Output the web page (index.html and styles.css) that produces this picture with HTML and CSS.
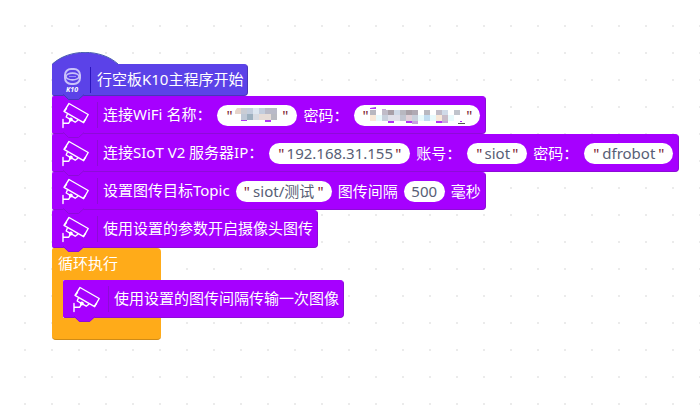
FILE: index.html
```html
<!DOCTYPE html>
<html lang="zh-CN">
<head>
<meta charset="utf-8">
<title>行空板K10主程序</title>
<link rel="stylesheet" href="styles.css">
</head>
<body>
<svg class="defs" aria-hidden="true">
  <symbol id="camera" viewBox="0 0 28 28">
    <g fill="none" stroke="#fff" stroke-width="1.4" stroke-linejoin="round" stroke-linecap="round">
      <path d="M8 2.500 27.200 13.500 22.600 21.700 3 10.300Z"/>
      <path d="M5.500 7.500 3.500 10M24.500 18.500l-2 2.500"/>
      <path d="M2 18.500v8M2 22.300h5.600l1.600-2.600M6.200 13.500l-1 2.500 9 5.200 2.600-2"/>
      <circle cx="9.800" cy="18.400" r="1.300" fill="#fff"/>
    </g>
  </symbol>
  <symbol id="tab" viewBox="0 0 22 7">
    <path class="tab-shape" d="M0 0V1L5.500 6H15.500L21 1V0Z"/>
    <path class="tab-line" d="M0 .5h.5L5.500 5.500H15.500L21 .5" />
  </symbol>
</svg>
<main class="workspace">
  <section class="stack">
    <div class="block start">
      <svg class="hat" viewBox="0 0 66 13" aria-hidden="true"><path d="M0 13V12C17-3.500 49-3.500 66 12V13Z" fill="#5b42e8"/><path d="M.5 12C17-3.500 49-3.500 66 12" fill="none" stroke="#4a5fae"/></svg>
      <svg class="icon board" viewBox="0 0 28 28" aria-hidden="true">
        <rect x="4" y="3" width="15" height="15" rx="6" fill="none" stroke="#c9c2fa" stroke-width="2"/>
        <ellipse cx="11.500" cy="10.500" rx="6.500" ry="3.400" fill="none" stroke="#c9c2fa" stroke-width="1.600"/>
        <path d="M8 10.500h7" stroke="#9d91f3"/>
        <text x="5" y="26" class="board-name">K10</text>
      </svg>
      <span class="label">行空板K10主程序开始</span>
      <svg class="tab"><use href="#tab"/></svg>
    </div>
    <div class="block">
      <svg class="icon" aria-hidden="true"><use href="#camera"/></svg>
      <span class="label">连接WiFi 名称：</span>
      <span class="pill name"><span class="quote">"</span>
        <svg class="mosaic" width="44" height="16" viewBox="0 0 44 16" role="img" aria-label="已隐藏">
          <path fill="#e6d5cc" d="M2 1h4v6H0V4z"/><path fill="#c9ccd4" d="M6 1h6v6H6z"/><path fill="#c3cddd" d="M12 1h6v6h-6zM24 1h6v6h-6z"/><path fill="#dde6f0" d="M18 1h6v6h-6z"/><path fill="#b9bac8" d="M30 1h12v6H30z"/>
          <path fill="#bfc8d6" d="M6 7h6v6H6z"/><path fill="#9db0bf" d="M12 7h6v6h-6z"/><path fill="#d8dbe2" d="M18 7h6v6h-6z"/><path fill="#e6dcd7" d="M24 7h12v6H24z"/><path fill="#b9bac1" d="M36 7h6v6h-6z"/>
          <path fill="#ae36f2" d="M6 13h6v1H6zM30 13h6v2h-6z"/>
        </svg>
      <span class="quote">"</span></span>
      <span class="label">密码：</span>
      <span class="pill secret"><span class="quote">"</span>
        <svg class="mosaic" width="96" height="18" viewBox="0 0 96 18" role="img" aria-label="已隐藏">
          <path fill="#b8b8c0" d="M1 4h6v5H1zM31 4h6v5h-6zM55 4h6v5h-6z"/>
          <path fill="#c0bcc8" d="M13 4h6v5h-6zM67 4h6v5h-6z"/>
          <path fill="#a8a0a8" d="M19 4h6v5h-6zM37 4h6v5h-6z"/>
          <path fill="#d0dae8" d="M25 4h6v5h-6zM73 4h6v5h-6z"/>
          <path fill="#b0aab4" d="M43 4h6v5h-6z"/>
          <path fill="#c0c4cc" d="M85 4h6v5h-6z"/>
          <path fill="#f8e8d8" d="M1 9h6v6H1zM67 9h6v6h-6z"/>
          <path fill="#e8fafc" d="M7 9h6v6H7zM49 9h6v6h-6zM61 9h6v6h-6zM79 9h6v6h-6z"/>
          <path fill="#c8d0dc" d="M13 9h6v6h-6zM43 9h6v6h-6z"/>
          <path fill="#e0e0ea" d="M19 9h12v6H19z"/>
          <path fill="#c0c4d0" d="M31 9h6v6h-6z"/>
          <path fill="#e0d0d8" d="M37 9h6v6h-6z"/>
          <path fill="#c0dcf0" d="M55 9h6v6h-6z"/>
          <path fill="#c8bcc8" d="M73 9h6v6h-6z"/>
          <path fill="#ae36f2" d="M1 2l6-1v2H1zM19 15h6v2h-6zM37 15h6v2h-6zM67 15h6v2h-6zM91 15h2v1h-2z"/>
          <path fill="#c9a0e0" d="M13 3h4v1h-4zM43 15h6v3h-6zM73 15h6v2h-6z"/>
          <path fill="#555" d="M89 17h7v1h-7z"/>
        </svg>
      <span class="quote">"</span></span>
      <svg class="tab"><use href="#tab"/></svg>
    </div>
    <div class="block">
      <svg class="icon" aria-hidden="true"><use href="#camera"/></svg>
      <label class="label" for="ip">连接SIoT V2 服务器IP：</label>
      <span class="pill ip"><span class="quote">"</span><input id="ip" value="192.168.31.155"><span class="quote">"</span></span>
      <label class="label" for="account">账号：</label>
      <span class="pill account"><span class="quote">"</span><input id="account" value="siot"><span class="quote">"</span></span>
      <label class="label" for="password">密码：</label>
      <span class="pill password"><span class="quote">"</span><input id="password" value="dfrobot"><span class="quote">"</span></span>
      <svg class="tab"><use href="#tab"/></svg>
    </div>
    <div class="block">
      <svg class="icon" aria-hidden="true"><use href="#camera"/></svg>
      <label class="label" for="topic">设置图传目标Topic</label>
      <span class="pill topic"><span class="quote">"</span><input id="topic" value="siot/测试"><span class="quote">"</span></span>
      <label class="label" for="interval">图传间隔</label>
      <span class="pill interval"><input id="interval" value="500"></span>
      <span class="label">毫秒</span>
      <svg class="tab"><use href="#tab"/></svg>
    </div>
    <div class="block">
      <svg class="icon" aria-hidden="true"><use href="#camera"/></svg>
      <span class="label">使用设置的参数开启摄像头图传</span>
      <svg class="tab"><use href="#tab"/></svg>
    </div>
    <div class="loop">
      <div class="loop-head">循环执行</div>
      <div class="loop-body">
        <div class="block">
          <svg class="icon" aria-hidden="true"><use href="#camera"/></svg>
          <span class="label">使用设置的图传间隔传输一次图像</span>
          <svg class="tab"><use href="#tab"/></svg>
        </div>
      </div>
      <div class="loop-foot"></div>
    </div>
  </section>
</main>
</body>
</html>
```
FILE: styles.css
```css
* {
  box-sizing: border-box;
}

body {
  margin: 0;
  background: #fff;
  color: #fff;
  font: 15px/20px "Noto Sans", "Noto Sans CJK SC", sans-serif;
}

.defs {
  position: absolute;
  width: 0;
  height: 0;
}

.workspace {
  min-height: 100vh;
  padding: 64px 20px 20px 52px;
  background: linear-gradient(#ebebeb, #ebebeb) 0 0 / 2px 2px no-repeat;
  background: conic-gradient(from 270deg at 2px 2px, #ebebeb 90deg, transparent 0) 24px 25px / 27px 27px;
}

.stack {
  display: flex;
  flex-direction: column;
  align-items: flex-start;
}

.block {
  --fill: #a600ff;
  --edge: #8d0bd8;
  position: relative;
  display: flex;
  align-items: center;
  width: max-content;
  height: 38px;
  padding: 0 4px 0 8px;
  border: 1px solid var(--edge);
  border-top-color: var(--fill);
  border-left-color: var(--fill);
  border-radius: 2px 4px 4px 2px;
  background: var(--fill);
  white-space: nowrap;
}

.start {
  --fill: #5b42e8;
  --edge: #4935ba;
  height: 32px;
  border-top-left-radius: 0;
}

.hat {
  position: absolute;
  left: -1px;
  bottom: 30px;
  width: 66px;
  height: 13px;
}

.tab {
  position: absolute;
  z-index: 1;
  left: 10px;
  top: calc(100% - 1px);
  width: 22px;
  height: 7px;
}

.tab-shape {
  fill: var(--fill);
}

.tab-line {
  fill: none;
  stroke: var(--edge);
}

.icon {
  flex: none;
  width: 28px;
  height: 28px;
  margin-right: 8px;
}

.label {
  padding-bottom: 1px;
}

.icon + .label {
  padding-left: 5px;
  border-left: 1px solid var(--edge);
  line-height: 25px;
}

.start .icon {
  margin-right: 1px;
}

.start .icon + .label {
  padding-left: 6px;
  border-color: #2b14bd;
}

.board-name {
  fill: #fff;
  font: italic bold 7px "Open Sans", sans-serif;
}

.pill {
  display: flex;
  align-items: center;
  justify-content: space-between;
  height: 21px;
  margin: 0 6px;
  padding: 0 9px;
  border-radius: 11px;
  background: #fff;
  color: #575e75;
}

.pill:has(+ .tab) {
  margin-right: 1px;
}

.quote {
  color: #7b2030;
}

.name { width: 80px; }
.secret { width: 126px; padding: 0 8px; }
.ip { width: 141px; }
.account { width: 60px; }
.password { width: 89px; }
.topic { width: 96px; padding: 0 8px; }
.interval { width: 41px; padding: 0 4px; }

.pill input {
  flex: 1;
  min-width: 0;
  padding: 0 0 1px;
  border: 0;
  outline: 0;
  background: none;
  color: inherit;
  font: inherit;
  text-align: center;
}

.mosaic {
  flex: none;
}

.loop {
  --loop: #ffab19;
  --loop-edge: #cf8b17;
}

.loop-head,
.loop-foot {
  width: 109px;
  background: var(--loop);
}

.loop-head {
  height: 32px;
  padding: 5px 6px;
  border-radius: 2px 4px 0 0;
}

.loop-body {
  border-left: 11px solid var(--loop);
}

.loop-foot {
  height: 22px;
  border-bottom: 1px solid var(--loop-edge);
  border-radius: 0 0 4px 4px;
}
```
